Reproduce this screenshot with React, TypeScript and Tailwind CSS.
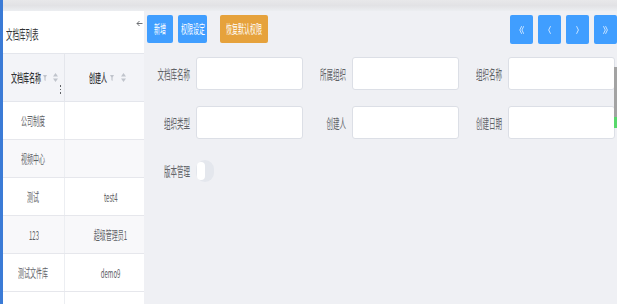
import React from "react";

type SqProps = {
  children: React.ReactNode;
  className?: string;
};

// The screenshot's text is horizontally condensed, so every label is squeezed
const Sq = ({ children, className = "" }: SqProps) => (
  <span className={`inline-block whitespace-nowrap scale-x-[0.5] ${className}`}>
    {children}
  </span>
);

const FilterIcon = () => (
  <svg width="4" height="6" viewBox="0 0 4 6" className="shrink-0">
    <path d="M0 0h4L2.6 2.6V6L1.4 5.2V2.6z" fill="#c0c4cc" />
  </svg>
);

const SortIcon = () => (
  <svg width="5" height="9" viewBox="0 0 5 9" className="shrink-0">
    <path d="M2.5 0L5 3.6H0z" fill="#c0c4cc" />
    <path d="M2.5 9L0 5.4h5z" fill="#c0c4cc" />
  </svg>
);

const NavButton = ({ dir }: { dir: "first" | "prev" | "next" | "last" }) => {
  const paths: Record<string, string> = {
    first: "M2.5 0.5L0.8 4l1.7 3.5M4.6 0.5L2.9 4l1.7 3.5",
    prev: "M3.4 0.5L1.7 4l1.7 3.5",
    next: "M1.7 0.5L3.4 4l-1.7 3.5",
    last: "M0.6 0.5L2.3 4l-1.7 3.5M2.7 0.5L4.4 4l-1.7 3.5",
  };
  return (
    <button className="w-[23px] h-[29px] rounded-[2px] bg-[#409eff] flex items-center justify-center">
      <svg width="5" height="8" viewBox="0 0 5 8">
        <path
          d={paths[dir]}
          fill="none"
          stroke="#c6e2ff"
          strokeWidth="1"
          strokeLinecap="round"
          strokeLinejoin="round"
        />
      </svg>
    </button>
  );
};

const FormField = ({ label }: { label: string }) => (
  <div className="flex items-center w-[156px]">
    <div className="w-[49px] pr-[6px] flex justify-end text-[13px] text-[#606266]">
      <Sq className="origin-right">{label}</Sq>
    </div>
    <div className="w-[107px] h-[33px] bg-white border border-[#dcdfe6] rounded-[3px]" />
  </div>
);

const rows = [
  { name: "公司制度", creator: "" },
  { name: "视频中心", creator: "" },
  { name: "测试", creator: "test4" },
  { name: "123", creator: "超级管理员1" },
  { name: "测试文件库", creator: "demo9" },
];

export default function App() {
  return (
    <div className="relative w-[617px] h-[304px] overflow-hidden flex bg-[#eff0f4] font-['Noto_Sans_CJK_SC','Liberation_Sans',sans-serif]">
      {/* Left accent bar */}
      <div className="w-[3px] h-full bg-[#3b7bd6] shrink-0" />

      <div className="flex-1 flex flex-col">
        {/* Top shadow strip */}
        <div className="h-[11px] bg-gradient-to-b from-[#e8e8ea] via-[#e2e2e5] to-[#eceef1]" />

        <div className="flex flex-1">
          {/* Library list panel */}
          <div className="w-[141px] bg-white flex flex-col">
            <div className="relative h-[42px] flex items-center pl-[3px] pt-[4px] text-[13px] text-[#303133]">
              <Sq className="origin-left">文档库列表</Sq>
              <svg
                width="7"
                height="7"
                viewBox="0 0 7 7"
                className="absolute left-[133px] top-[9px]"
              >
                <path
                  d="M6.5 3.5H1M3.5 1L1 3.5 3.5 6"
                  fill="none"
                  stroke="#606266"
                  strokeWidth="0.9"
                />
              </svg>
            </div>

            {/* Table header */}
            <div className="h-[49px] flex bg-[#f3f4f8] border-t border-b border-[#e4e6ec] text-[12px] text-[#303133] font-medium">
              <div className="relative w-[62px] flex items-center justify-center gap-[2px] border-r border-[#e4e6ec] pl-[1px]">
                <div className="w-[30px] flex justify-center">
                  <Sq>文档库名称</Sq>
                </div>
                <FilterIcon />
                <span className="w-[2px]" />
                <SortIcon />
                <div className="absolute right-[3px] top-[31px] flex flex-col gap-[2px]">
                  <span className="w-[1px] h-[1.5px] bg-[#606266]" />
                  <span className="w-[1px] h-[1.5px] bg-[#606266]" />
                  <span className="w-[1px] h-[1.5px] bg-[#606266]" />
                </div>
              </div>
              <div className="flex-1 flex items-center justify-center gap-[2px] pl-[4px]">
                <div className="w-[20px] flex justify-center">
                  <Sq>创建人</Sq>
                </div>
                <FilterIcon />
                <span className="w-[3px]" />
                <SortIcon />
              </div>
            </div>

            {/* Table body */}
            {rows.map((row, i) => (
              <div
                key={row.name}
                className={`h-[38px] flex border-b border-[#e6e7ec] text-[12px] text-[#606266] ${
                  i % 2 === 1 ? "bg-[#f8f8fa]" : "bg-white"
                }`}
              >
                <div className="w-[62px] flex items-center justify-center border-r border-[#eceef2]">
                  <Sq>{row.name}</Sq>
                </div>
                <div className="flex-1 flex items-center justify-center pl-[12px]">
                  <Sq>{row.creator}</Sq>
                </div>
              </div>
            ))}
            <div className="flex-1 flex">
              <div className="w-[62px] border-r border-[#eceef2]" />
            </div>
          </div>

          {/* Main content */}
          <div className="flex-1 flex flex-col pl-[3px] pt-[4px]">
            <div className="flex items-start">
              <div className="flex items-center text-[12px] text-white">
                <button className="w-[26px] h-[28px] rounded-[2px] bg-[#409eff] flex items-center justify-center">
                  <Sq>新增</Sq>
                </button>
                <button className="ml-[5px] w-[29px] h-[28px] rounded-[2px] bg-[#409eff] flex items-center justify-center">
                  <Sq>权限设定</Sq>
                </button>
                <button className="ml-[13px] w-[48px] h-[28px] rounded-[2px] bg-[#e6a23c] flex items-center justify-center">
                  <Sq>恢复默认权限</Sq>
                </button>
              </div>
              <div className="ml-auto flex gap-[5px]">
                <NavButton dir="first" />
                <NavButton dir="prev" />
                <NavButton dir="next" />
                <NavButton dir="last" />
              </div>
            </div>

            {/* Search form */}
            <div className="mt-[13px] flex">
              <FormField label="文档库名称" />
              <FormField label="所属组织" />
              <FormField label="组织名称" />
            </div>
            <div className="mt-[16px] flex">
              <FormField label="组织类型" />
              <FormField label="创建人" />
              <FormField label="创建日期" />
            </div>
            <div className="mt-[21px] flex items-center">
              <div className="w-[49px] pr-[6px] flex justify-end text-[13px] text-[#606266]">
                <Sq className="origin-right">版本管理</Sq>
              </div>
              <div className="w-[18px] h-[22px] rounded-[10px] bg-[#e4e7ed] flex items-center pl-[1px]">
                <span className="w-[8px] h-[18px] rounded-full bg-white" />
              </div>
            </div>
          </div>
        </div>
      </div>

      {/* Browser scrollbar remnant on the right edge */}
      <div className="absolute right-0 top-[67px] w-[3px] flex flex-col">
        <div className="h-[50px] bg-[#a3a3a3]" />
        <div className="h-[11px] bg-[#57d86b]" />
      </div>
    </div>
  );
}
